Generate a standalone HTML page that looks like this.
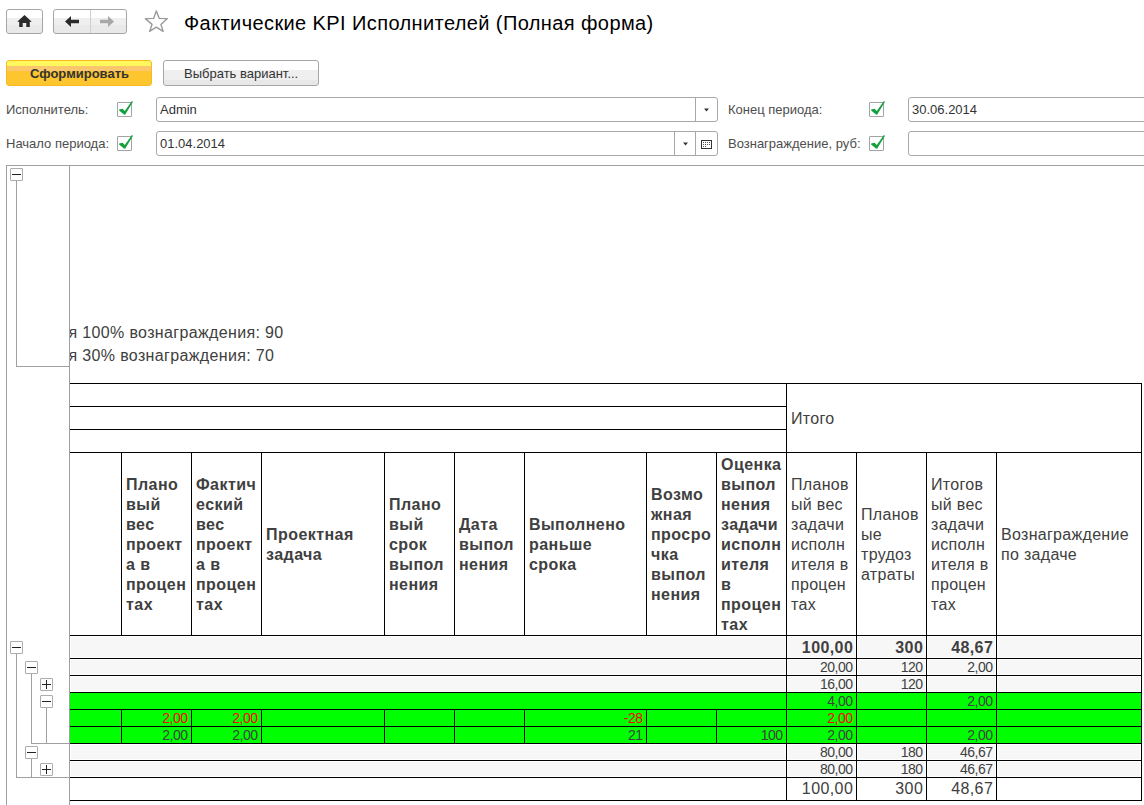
<!DOCTYPE html>
<html><head><meta charset="utf-8">
<style>
*{margin:0;padding:0;box-sizing:border-box}
html,body{width:1144px;height:805px;overflow:hidden;background:#fff;font-family:"Liberation Sans",sans-serif;position:relative}
.a{position:absolute}
.btn{position:absolute;border:1px solid #a6a6a6;border-radius:3px;background:linear-gradient(#fff 0,#fff 36%,#efefef 36%,#efefef 64%,#e9e9e9 64%,#e9e9e9 100%)}
.lbl{position:absolute;font-size:13px;color:#4d4d4d;white-space:nowrap;line-height:15px}
.inp{position:absolute;border:1px solid #a8a8a8;border-radius:3px;background:#fff}
.vdiv{position:absolute;top:0;bottom:0;width:1px;background:#a8a8a8}
.cb{position:absolute;width:15px;height:15px;border:1px solid #a3a3a3;border-radius:1px;background:#fff}
.hl{position:absolute;height:1px;background:#000;z-index:2}
.vl{position:absolute;width:1px;background:#000;z-index:2}
.gl{position:absolute;background:#a0a0a0}
.tb{position:absolute;width:13px;height:13px;border:1px solid #acacac;border-radius:1px;background:#fff}
.txt{position:absolute;white-space:nowrap;color:#404040}
.hd{position:absolute;font-weight:bold;font-size:16px;line-height:20px;color:#404040;display:flex;align-items:center;padding-left:5px;white-space:nowrap;letter-spacing:0.45px}
.hn{position:absolute;font-size:16px;line-height:20px;color:#404040;display:flex;align-items:center;padding-left:5px;white-space:nowrap;letter-spacing:0.3px}
.num{position:absolute;text-align:right;font-size:13px;line-height:17px;color:#404040;padding-right:3px;white-space:nowrap}
</style></head><body>

<!-- toolbar -->
<div class="btn" style="left:6px;top:9px;width:37px;height:25px"></div>
<svg class="a" style="left:0;top:0" width="200" height="40">
  <path d="M17.2 21.8 L24.5 15 L31.8 21.8 L29.8 21.8 L29.8 27 L26.3 27 L26.3 23 L22.7 23 L22.7 27 L19.2 27 L19.2 21.8 Z" fill="#2b2b2b"/>
</svg>
<div class="btn" style="left:53px;top:9px;width:74px;height:25px"></div>
<div class="a" style="left:90px;top:10px;width:1px;height:23px;background:#cfcfcf"></div>
<svg class="a" style="left:0;top:0" width="200" height="40">
  <path d="M65 21.5 L71 16 L71 19.8 L79 19.8 L79 23.2 L71 23.2 L71 27 Z" fill="#2b2b2b"/>
  <path d="M114 21.5 L108 16 L108 19.8 L100 19.8 L100 23.2 L108 23.2 L108 27 Z" fill="#a8a8a8"/>
  <path d="M156.35 11 L159.3 18.4 L167.4 18.6 L160.9 24.4 L163.2 31.4 L156.35 27.2 L149.6 31.4 L152 24.4 L145.3 18.6 L153.6 18.4 Z" fill="none" stroke="#9a9a9a" stroke-width="1.4" stroke-linejoin="round"/>
</svg>
<div class="txt" style="left:184px;top:11px;font-size:20px;line-height:24px;color:#000;letter-spacing:0.4px">Фактические KPI Исполнителей (Полная форма)</div>

<!-- buttons -->
<div class="a" style="left:6px;top:60px;width:146px;height:26px;border:1px solid #f6bb22;border-radius:3px;background:linear-gradient(#fff85c 0,#fff85c 20%,#fbc66c 20%,#fbc66c 42%,#fdc62e 42%,#fdc62e 100%)"></div>
<div class="txt" style="left:30px;top:66px;font-size:13px;line-height:16px;font-weight:bold;color:#333">Сформировать</div>
<div class="btn" style="left:163px;top:60px;width:156px;height:26px;background:linear-gradient(#fff 0,#fff 37%,#efefef 37%,#efefef 80%,#e8e8e8 80%,#e8e8e8 100%)"></div>
<div class="txt" style="left:184px;top:66px;font-size:13px;line-height:16px;color:#333">Выбрать вариант...</div>

<!-- fields -->
<div class="lbl" style="left:6px;top:102px">Исполнитель:</div>
<div class="lbl" style="left:6px;top:136px">Начало периода:</div>
<div class="lbl" style="left:728px;top:102px">Конец периода:</div>
<div class="lbl" style="left:728px;top:136px">Вознаграждение, руб:</div>

<div class="inp" style="left:156px;top:97px;width:562px;height:25px"><div class="vdiv" style="left:538px"></div></div>
<div class="txt" style="left:160px;top:102px;font-size:13px;line-height:15px;color:#333">Admin</div>
<div class="inp" style="left:156px;top:131px;width:562px;height:25px"><div class="vdiv" style="left:517px"></div><div class="vdiv" style="left:538px"></div></div>
<div class="txt" style="left:160px;top:136px;font-size:13px;line-height:15px;color:#333">01.04.2014</div>
<div class="inp" style="left:908px;top:97px;width:260px;height:25px"></div>
<div class="txt" style="left:912px;top:102px;font-size:13px;line-height:15px;color:#333">30.06.2014</div>
<div class="inp" style="left:908px;top:131px;width:260px;height:25px"></div>

<svg class="a" style="left:0;top:0" width="1144" height="160">
  <path d="M704 108.6 L709 108.6 L706.5 111.4 Z" fill="#333"/>
  <path d="M683 142.6 L688 142.6 L685.5 145.4 Z" fill="#333"/>
  <rect x="701.5" y="140.5" width="10" height="8" fill="none" stroke="#333" stroke-width="1"/>
  <g fill="#555"><rect x="703" y="142" width="1" height="1"/><rect x="705" y="142" width="1" height="1"/><rect x="707" y="142" width="1" height="1"/><rect x="709" y="142" width="1" height="1"/>
  <rect x="703" y="144" width="1" height="1"/><rect x="705" y="144" width="1" height="1"/><rect x="707" y="144" width="1" height="1"/><rect x="709" y="144" width="1" height="1"/>
  <rect x="703" y="146" width="1" height="1"/><rect x="705" y="146" width="1" height="1"/></g>
</svg>

<div class="cb" style="left:117px;top:102px"></div>
<div class="cb" style="left:117px;top:136px"></div>
<div class="cb" style="left:869px;top:102px"></div>
<div class="cb" style="left:869px;top:136px"></div>
<svg class="a" style="left:0;top:0" width="1144" height="160">
  <defs><path id="ck" d="M0.1 7.6 L3.6 6.8 L5.8 9.1 L12.9 -1 L14 -0.2 L6.1 12.8 L5 12.6 L0.1 8.6 Z" fill="#12a03a"/></defs>
  <use href="#ck" x="119" y="102"/>
  <use href="#ck" x="119" y="136"/>
  <use href="#ck" x="871" y="102"/>
  <use href="#ck" x="871" y="136"/>
</svg>

<!-- report frame -->
<div class="gl" style="left:6px;top:165px;width:1138px;height:1px"></div>
<div class="gl" style="left:6px;top:165px;width:1px;height:640px"></div>
<div class="gl" style="left:69px;top:165px;width:1px;height:640px"></div>

<div class="hl" style="left:70px;top:383px;width:1072px"></div>
<div class="hl" style="left:70px;top:406px;width:716px"></div>
<div class="hl" style="left:70px;top:429px;width:716px"></div>
<div class="hl" style="left:70px;top:452px;width:1072px"></div>
<div class="vl" style="left:786px;top:383px;height:418px"></div>
<div class="vl" style="left:1141px;top:383px;height:418px"></div>
<div class="hn" style="left:786px;top:385px;width:354px;height:68px">Итого</div>
<div class="vl" style="left:121px;top:452px;height:183px"></div>
<div class="vl" style="left:191px;top:452px;height:183px"></div>
<div class="vl" style="left:261px;top:452px;height:183px"></div>
<div class="vl" style="left:384px;top:452px;height:183px"></div>
<div class="vl" style="left:454px;top:452px;height:183px"></div>
<div class="vl" style="left:524px;top:452px;height:183px"></div>
<div class="vl" style="left:646px;top:452px;height:183px"></div>
<div class="vl" style="left:716px;top:452px;height:183px"></div>
<div class="vl" style="left:786px;top:452px;height:183px"></div>
<div class="vl" style="left:856px;top:452px;height:183px"></div>
<div class="vl" style="left:926px;top:452px;height:183px"></div>
<div class="vl" style="left:996px;top:452px;height:183px"></div>
<div class="hd" style="left:121px;top:454px;width:69px;height:182px"><div>Плано<br>вый<br>вес<br>проект<br>а в<br>процен<br>тах</div></div>
<div class="hd" style="left:191px;top:454px;width:69px;height:182px"><div>Фактич<br>еский<br>вес<br>проект<br>а в<br>процен<br>тах</div></div>
<div class="hd" style="left:261px;top:454px;width:122px;height:182px"><div>Проектная<br>задача</div></div>
<div class="hd" style="left:384px;top:454px;width:69px;height:182px"><div>Плано<br>вый<br>срок<br>выпол<br>нения</div></div>
<div class="hd" style="left:454px;top:454px;width:69px;height:182px"><div>Дата<br>выпол<br>нения</div></div>
<div class="hd" style="left:524px;top:454px;width:121px;height:182px"><div>Выполнено<br>раньше<br>срока</div></div>
<div class="hd" style="left:646px;top:454px;width:69px;height:182px"><div>Возмо<br>жная<br>просро<br>чка<br>выпол<br>нения</div></div>
<div class="hd" style="left:716px;top:454px;width:69px;height:182px"><div>Оценка<br>выпол<br>нения<br>задачи<br>исполн<br>ителя<br>в<br>процен<br>тах</div></div>
<div class="hn" style="left:786px;top:454px;width:69px;height:182px"><div>Планов<br>ый вес<br>задачи<br>исполн<br>ителя в<br>процен<br>тах</div></div>
<div class="hn" style="left:856px;top:454px;width:69px;height:182px"><div>Планов<br>ые<br>трудоз<br>атраты</div></div>
<div class="hn" style="left:926px;top:454px;width:69px;height:182px"><div>Итогов<br>ый вес<br>задачи<br>исполн<br>ителя в<br>процен<br>тах</div></div>
<div class="hn" style="left:996px;top:454px;width:144px;height:182px"><div>Вознаграждение<br>по задаче</div></div>
<div class="hl" style="left:70px;top:635px;width:1072px"></div>
<div class="a" style="left:71px;top:637px;width:714px;height:20px;background:#f7f7f7"></div>
<div class="a" style="left:788px;top:637px;width:67px;height:20px;background:#f7f7f7"></div>
<div class="a" style="left:858px;top:637px;width:67px;height:20px;background:#f7f7f7"></div>
<div class="a" style="left:928px;top:637px;width:67px;height:20px;background:#f7f7f7"></div>
<div class="a" style="left:998px;top:637px;width:142px;height:20px;background:#f7f7f7"></div>
<div class="hl" style="left:70px;top:658px;width:1072px"></div>
<div class="vl" style="left:856px;top:635px;height:24px"></div>
<div class="vl" style="left:926px;top:635px;height:24px"></div>
<div class="vl" style="left:996px;top:635px;height:24px"></div>
<div class="num" style="left:787px;top:637px;width:69px;height:22px;line-height:22px;font-size:16px;font-weight:bold;color:#404040;letter-spacing:0.4px;padding-right:2.8px">100,00</div>
<div class="num" style="left:857px;top:637px;width:69px;height:22px;line-height:22px;font-size:16px;font-weight:bold;color:#404040;letter-spacing:0.4px;padding-right:2.8px">300</div>
<div class="num" style="left:927px;top:637px;width:69px;height:22px;line-height:22px;font-size:16px;font-weight:bold;color:#404040;letter-spacing:0.4px;padding-right:2.8px">48,67</div>
<div class="a" style="left:71px;top:660px;width:714px;height:14px;background:#f7f7f7"></div>
<div class="a" style="left:788px;top:660px;width:67px;height:14px;background:#f7f7f7"></div>
<div class="a" style="left:858px;top:660px;width:67px;height:14px;background:#f7f7f7"></div>
<div class="a" style="left:928px;top:660px;width:67px;height:14px;background:#f7f7f7"></div>
<div class="a" style="left:998px;top:660px;width:142px;height:14px;background:#f7f7f7"></div>
<div class="hl" style="left:70px;top:675px;width:1072px"></div>
<div class="vl" style="left:856px;top:658px;height:18px"></div>
<div class="vl" style="left:926px;top:658px;height:18px"></div>
<div class="vl" style="left:996px;top:658px;height:18px"></div>
<div class="num" style="left:787px;top:659px;width:69px;height:16px;line-height:16px;font-size:14px;font-weight:normal;color:#404040;letter-spacing:-0.45px;padding-right:3.3px">20,00</div>
<div class="num" style="left:857px;top:659px;width:69px;height:16px;line-height:16px;font-size:14px;font-weight:normal;color:#404040;letter-spacing:-0.45px;padding-right:3.3px">120</div>
<div class="num" style="left:927px;top:659px;width:69px;height:16px;line-height:16px;font-size:14px;font-weight:normal;color:#404040;letter-spacing:-0.45px;padding-right:3.3px">2,00</div>
<div class="a" style="left:71px;top:677px;width:714px;height:14px;background:#f7f7f7"></div>
<div class="a" style="left:788px;top:677px;width:67px;height:14px;background:#f7f7f7"></div>
<div class="a" style="left:858px;top:677px;width:67px;height:14px;background:#f7f7f7"></div>
<div class="a" style="left:928px;top:677px;width:67px;height:14px;background:#f7f7f7"></div>
<div class="a" style="left:998px;top:677px;width:142px;height:14px;background:#f7f7f7"></div>
<div class="hl" style="left:70px;top:692px;width:1072px"></div>
<div class="vl" style="left:856px;top:675px;height:18px"></div>
<div class="vl" style="left:926px;top:675px;height:18px"></div>
<div class="vl" style="left:996px;top:675px;height:18px"></div>
<div class="num" style="left:787px;top:676px;width:69px;height:16px;line-height:16px;font-size:14px;font-weight:normal;color:#404040;letter-spacing:-0.45px;padding-right:3.3px">16,00</div>
<div class="num" style="left:857px;top:676px;width:69px;height:16px;line-height:16px;font-size:14px;font-weight:normal;color:#404040;letter-spacing:-0.45px;padding-right:3.3px">120</div>
<div class="a" style="left:70px;top:693px;width:1071px;height:16px;background:#00ff00"></div>
<div class="hl" style="left:70px;top:709px;width:1072px"></div>
<div class="vl" style="left:856px;top:692px;height:18px"></div>
<div class="vl" style="left:926px;top:692px;height:18px"></div>
<div class="vl" style="left:996px;top:692px;height:18px"></div>
<div class="num" style="left:787px;top:693px;width:69px;height:16px;line-height:16px;font-size:14px;font-weight:normal;color:#404040;letter-spacing:-0.45px;padding-right:3.3px">4,00</div>
<div class="num" style="left:927px;top:693px;width:69px;height:16px;line-height:16px;font-size:14px;font-weight:normal;color:#404040;letter-spacing:-0.45px;padding-right:3.3px">2,00</div>
<div class="a" style="left:70px;top:710px;width:1071px;height:16px;background:#00ff00"></div>
<div class="hl" style="left:70px;top:726px;width:1072px"></div>
<div class="vl" style="left:121px;top:709px;height:18px"></div>
<div class="vl" style="left:191px;top:709px;height:18px"></div>
<div class="vl" style="left:261px;top:709px;height:18px"></div>
<div class="vl" style="left:384px;top:709px;height:18px"></div>
<div class="vl" style="left:454px;top:709px;height:18px"></div>
<div class="vl" style="left:524px;top:709px;height:18px"></div>
<div class="vl" style="left:646px;top:709px;height:18px"></div>
<div class="vl" style="left:716px;top:709px;height:18px"></div>
<div class="vl" style="left:856px;top:709px;height:18px"></div>
<div class="vl" style="left:926px;top:709px;height:18px"></div>
<div class="vl" style="left:996px;top:709px;height:18px"></div>
<div class="num" style="left:122px;top:710px;width:69px;height:16px;line-height:16px;font-size:14px;font-weight:normal;color:#ff0000;letter-spacing:-0.45px;padding-right:3.3px">2,00</div>
<div class="num" style="left:192px;top:710px;width:69px;height:16px;line-height:16px;font-size:14px;font-weight:normal;color:#ff0000;letter-spacing:-0.45px;padding-right:3.3px">2,00</div>
<div class="num" style="left:525px;top:710px;width:121px;height:16px;line-height:16px;font-size:14px;font-weight:normal;color:#ff0000;letter-spacing:-0.45px;padding-right:3.3px">-28</div>
<div class="num" style="left:787px;top:710px;width:69px;height:16px;line-height:16px;font-size:14px;font-weight:normal;color:#ff0000;letter-spacing:-0.45px;padding-right:3.3px">2,00</div>
<div class="a" style="left:70px;top:727px;width:1071px;height:16px;background:#00ff00"></div>
<div class="hl" style="left:70px;top:743px;width:1072px"></div>
<div class="vl" style="left:121px;top:726px;height:18px"></div>
<div class="vl" style="left:191px;top:726px;height:18px"></div>
<div class="vl" style="left:261px;top:726px;height:18px"></div>
<div class="vl" style="left:384px;top:726px;height:18px"></div>
<div class="vl" style="left:454px;top:726px;height:18px"></div>
<div class="vl" style="left:524px;top:726px;height:18px"></div>
<div class="vl" style="left:646px;top:726px;height:18px"></div>
<div class="vl" style="left:716px;top:726px;height:18px"></div>
<div class="vl" style="left:856px;top:726px;height:18px"></div>
<div class="vl" style="left:926px;top:726px;height:18px"></div>
<div class="vl" style="left:996px;top:726px;height:18px"></div>
<div class="num" style="left:122px;top:727px;width:69px;height:16px;line-height:16px;font-size:14px;font-weight:normal;color:#404040;letter-spacing:-0.45px;padding-right:3.3px">2,00</div>
<div class="num" style="left:192px;top:727px;width:69px;height:16px;line-height:16px;font-size:14px;font-weight:normal;color:#404040;letter-spacing:-0.45px;padding-right:3.3px">2,00</div>
<div class="num" style="left:525px;top:727px;width:121px;height:16px;line-height:16px;font-size:14px;font-weight:normal;color:#404040;letter-spacing:-0.45px;padding-right:3.3px">21</div>
<div class="num" style="left:717px;top:727px;width:69px;height:16px;line-height:16px;font-size:14px;font-weight:normal;color:#404040;letter-spacing:-0.45px;padding-right:3.3px">100</div>
<div class="num" style="left:787px;top:727px;width:69px;height:16px;line-height:16px;font-size:14px;font-weight:normal;color:#404040;letter-spacing:-0.45px;padding-right:3.3px">2,00</div>
<div class="num" style="left:927px;top:727px;width:69px;height:16px;line-height:16px;font-size:14px;font-weight:normal;color:#404040;letter-spacing:-0.45px;padding-right:3.3px">2,00</div>
<div class="a" style="left:71px;top:745px;width:714px;height:14px;background:#f7f7f7"></div>
<div class="a" style="left:788px;top:745px;width:67px;height:14px;background:#f7f7f7"></div>
<div class="a" style="left:858px;top:745px;width:67px;height:14px;background:#f7f7f7"></div>
<div class="a" style="left:928px;top:745px;width:67px;height:14px;background:#f7f7f7"></div>
<div class="a" style="left:998px;top:745px;width:142px;height:14px;background:#f7f7f7"></div>
<div class="hl" style="left:70px;top:760px;width:1072px"></div>
<div class="vl" style="left:856px;top:743px;height:18px"></div>
<div class="vl" style="left:926px;top:743px;height:18px"></div>
<div class="vl" style="left:996px;top:743px;height:18px"></div>
<div class="num" style="left:787px;top:744px;width:69px;height:16px;line-height:16px;font-size:14px;font-weight:normal;color:#404040;letter-spacing:-0.45px;padding-right:3.3px">80,00</div>
<div class="num" style="left:857px;top:744px;width:69px;height:16px;line-height:16px;font-size:14px;font-weight:normal;color:#404040;letter-spacing:-0.45px;padding-right:3.3px">180</div>
<div class="num" style="left:927px;top:744px;width:69px;height:16px;line-height:16px;font-size:14px;font-weight:normal;color:#404040;letter-spacing:-0.45px;padding-right:3.3px">46,67</div>
<div class="a" style="left:71px;top:762px;width:714px;height:14px;background:#f7f7f7"></div>
<div class="a" style="left:788px;top:762px;width:67px;height:14px;background:#f7f7f7"></div>
<div class="a" style="left:858px;top:762px;width:67px;height:14px;background:#f7f7f7"></div>
<div class="a" style="left:928px;top:762px;width:67px;height:14px;background:#f7f7f7"></div>
<div class="a" style="left:998px;top:762px;width:142px;height:14px;background:#f7f7f7"></div>
<div class="hl" style="left:70px;top:777px;width:1072px"></div>
<div class="vl" style="left:856px;top:760px;height:18px"></div>
<div class="vl" style="left:926px;top:760px;height:18px"></div>
<div class="vl" style="left:996px;top:760px;height:18px"></div>
<div class="num" style="left:787px;top:761px;width:69px;height:16px;line-height:16px;font-size:14px;font-weight:normal;color:#404040;letter-spacing:-0.45px;padding-right:3.3px">80,00</div>
<div class="num" style="left:857px;top:761px;width:69px;height:16px;line-height:16px;font-size:14px;font-weight:normal;color:#404040;letter-spacing:-0.45px;padding-right:3.3px">180</div>
<div class="num" style="left:927px;top:761px;width:69px;height:16px;line-height:16px;font-size:14px;font-weight:normal;color:#404040;letter-spacing:-0.45px;padding-right:3.3px">46,67</div>
<div class="hl" style="left:70px;top:800px;width:1072px"></div>
<div class="vl" style="left:856px;top:777px;height:24px"></div>
<div class="vl" style="left:926px;top:777px;height:24px"></div>
<div class="vl" style="left:996px;top:777px;height:24px"></div>
<div class="num" style="left:787px;top:778px;width:69px;height:22px;line-height:22px;font-size:16px;font-weight:normal;color:#404040;letter-spacing:0.4px;padding-right:2.8px">100,00</div>
<div class="num" style="left:857px;top:778px;width:69px;height:22px;line-height:22px;font-size:16px;font-weight:normal;color:#404040;letter-spacing:0.4px;padding-right:2.8px">300</div>
<div class="num" style="left:927px;top:778px;width:69px;height:22px;line-height:22px;font-size:16px;font-weight:normal;color:#404040;letter-spacing:0.4px;padding-right:2.8px">48,67</div>
<div class="tb" style="left:10px;top:168px"></div><div class="a" style="left:12px;top:174px;width:9px;height:1px;background:#222"></div>
<div class="gl" style="left:16px;top:181px;width:1px;height:185px"></div>
<div class="gl" style="left:16px;top:366px;width:53px;height:1px"></div>
<div class="tb" style="left:10px;top:641px"></div><div class="a" style="left:12px;top:647px;width:9px;height:1px;background:#222"></div>
<div class="gl" style="left:16px;top:654px;width:1px;height:123px"></div>
<div class="gl" style="left:16px;top:777px;width:53px;height:1px"></div>
<div class="tb" style="left:25px;top:661px"></div><div class="a" style="left:27px;top:667px;width:9px;height:1px;background:#222"></div>
<div class="gl" style="left:31px;top:674px;width:1px;height:69px"></div>
<div class="gl" style="left:31px;top:743px;width:38px;height:1px"></div>
<div class="tb" style="left:40px;top:678px"></div><div class="a" style="left:42px;top:684px;width:9px;height:1px;background:#222"></div><div class="a" style="left:46px;top:680px;width:1px;height:9px;background:#222"></div>
<div class="tb" style="left:40px;top:695px"></div><div class="a" style="left:42px;top:701px;width:9px;height:1px;background:#222"></div>
<div class="gl" style="left:46px;top:708px;width:1px;height:35px"></div>
<div class="tb" style="left:25px;top:746px"></div><div class="a" style="left:27px;top:752px;width:9px;height:1px;background:#222"></div>
<div class="gl" style="left:31px;top:759px;width:1px;height:18px"></div>
<div class="tb" style="left:40px;top:763px"></div><div class="a" style="left:42px;top:769px;width:9px;height:1px;background:#222"></div><div class="a" style="left:46px;top:765px;width:1px;height:9px;background:#222"></div>
<div class="a" style="left:70px;top:310px;width:700px;height:60px;overflow:hidden"><div class="txt" style="left:-1.5px;top:11px;font-size:16px;line-height:23px;letter-spacing:0.35px">я 100% вознаграждения: 90<br>я 30% вознаграждения: 70</div></div>

</body></html>
